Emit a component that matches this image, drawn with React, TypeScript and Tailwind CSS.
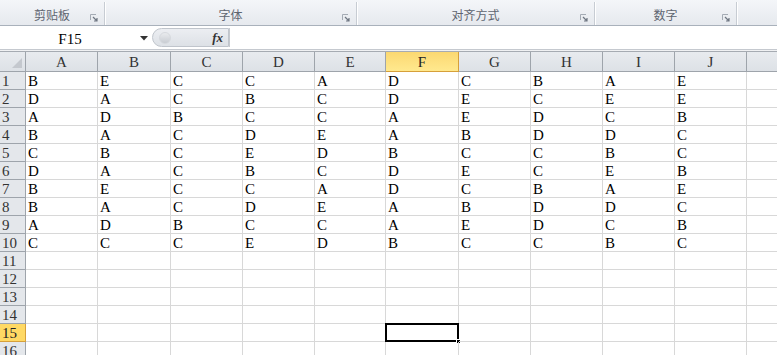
import React from 'react';

const cols = ['A', 'B', 'C', 'D', 'E', 'F', 'G', 'H', 'I', 'J'];
const widths = [72, 73, 72, 72, 71, 73, 72, 72, 72, 72];

const data = [
  'BECCADCBAE',
  'DACBCDECEE',
  'ADBCCAEDCB',
  'BACDEABDDC',
  'CBCEDBCCBC',
  'DACBCDECEB',
  'BECCADCBAE',
  'BACDEABDDC',
  'ADBCCAEDCB',
  'CCCEDBCCBC',
];

const cellFont = { fontFamily: "'Liberation Serif', 'DejaVu Serif', serif" };

/* ── little dialog launcher arrow in ribbon group ── */
function Launcher() {
  return (
    <svg width="9" height="9" viewBox="0 0 9 9" className="absolute right-[5px] top-[12px]">
      <path d="M0.5 0.5 H6 M0.5 0.5 V6" stroke="#a4abb4" strokeWidth="1" fill="none" />
      <path d="M3 3 L7 7 M7 4 V7 H4" stroke="#6f7782" strokeWidth="1.2" fill="none" />
    </svg>
  );
}

function Group({ label, width, launcher = true }: { label: string; width: number; launcher?: boolean }) {
  return (
    <div
      className="relative h-full flex items-center justify-center pt-[3px] border-r border-[#c7ccd3] shadow-[1px_0_0_#ffffff]"
      style={{ width }}
    >
      <span className="text-[12px] text-[#5e6570]" style={{ fontFamily: "'Noto Sans CJK SC', sans-serif" }}>
        {label}
      </span>
      {launcher && <Launcher />}
    </div>
  );
}

export default function App() {
  return (
    <div className="w-[777px] h-[355px] overflow-hidden bg-white select-none">
      {/* Ribbon group labels */}
      <div className="flex h-[26px] bg-gradient-to-b from-[#f4f6f9] to-[#e6e9ee] border-b border-[#a9b1bb] pt-[2px]">
        <Group label="剪贴板" width={105} />
        <Group label="字体" width={252} />
        <Group label="对齐方式" width={238} />
        <Group label="数字" width={142} />
        <div className="flex-1" />
      </div>

      {/* Formula bar */}
      <div className="flex h-[24px] bg-white border-b border-[#c5c9cf]">
        <div className="relative w-[152px] flex items-center">
          <span className="w-[140px] pt-[3px] text-center text-[15px] text-black" style={cellFont}>
            F15
          </span>
          <svg width="8" height="5" viewBox="0 0 8 5" className="absolute left-[140px] top-[10px]">
            <path d="M0 0 H8 L4 4.5 Z" fill="#333" />
          </svg>
        </div>
        <div className="relative w-[77px] my-[2px] flex items-center bg-gradient-to-b from-[#eceef2] to-[#dde1e6] border border-[#c0c5cc] rounded-l-full">
          <div className="ml-[6px] w-[12px] h-[12px] rounded-full bg-gradient-to-b from-[#e9ebee] to-[#c8ccd2] border border-[#d6d9de]" />
          <span
            className="ml-auto mr-[5px] text-[13px] italic font-bold text-[#333]"
            style={{ fontFamily: "'Liberation Serif', serif" }}
          >
            fx
          </span>
        </div>
        <div className="flex-1 border-l border-[#c5c9cf] my-[2px]" />
      </div>

      <div className="h-[2px] bg-[#f0f1f3] border-b border-[#a6abb2]" />

      {/* Column headers */}
      <div className="flex h-[20px]">
        <div className="relative w-[26px] shrink-0 bg-gradient-to-b from-[#e8ebef] to-[#dde1e6] border-r border-b border-[#9ea4ab]">
          <svg width="10" height="10" viewBox="0 0 10 10" className="absolute right-[3px] bottom-[3px]">
            <path d="M10 0 V10 H0 Z" fill="#c4c8ce" />
          </svg>
        </div>
        {cols.map((c, i) => (
          <div
            key={c}
            className={
              c === 'F'
                ? 'shrink-0 flex items-center justify-center pt-[2px] bg-gradient-to-b from-[#fbd871] to-[#ffe98e] border-r border-b border-[#d6a03a] text-[15px] text-[#222]'
                : 'shrink-0 flex items-center justify-center pt-[2px] bg-gradient-to-b from-[#e8ebef] to-[#dde1e6] border-r border-b border-[#9ea4ab] text-[15px] text-[#333]'
            }
            style={{ width: widths[i], ...cellFont }}
          >
            {c}
          </div>
        ))}
        <div className="flex-1 bg-gradient-to-b from-[#e8ebef] to-[#dde1e6] border-b border-[#9ea4ab]" />
      </div>

      {/* Rows */}
      {Array.from({ length: 16 }).map((_, r) => {
        const row = data[r];
        const selected = r === 14;
        return (
          <div key={r} className="flex h-[18px]">
            <div
              className={
                selected
                  ? 'w-[26px] shrink-0 flex items-center pl-[2px] pt-[2px] bg-[#ffd964] border-r border-b border-[#d6a03a] text-[15px] text-[#222]'
                  : 'w-[26px] shrink-0 flex items-center pl-[2px] pt-[2px] bg-[#e4e7eb] border-r border-b border-[#9ea4ab] text-[15px] text-[#333]'
              }
              style={cellFont}
            >
              {r + 1}
            </div>
            {cols.map((c, i) => {
              const active = selected && c === 'F';
              return (
                <div
                  key={c}
                  className="relative shrink-0 flex items-center pl-[2px] pt-[2px] border-r border-b border-[#d8d8d8] text-[15px] text-black"
                  style={{ width: widths[i], ...cellFont }}
                >
                  {row ? row[i] : ''}
                  {active && (
                    <>
                      <div className="absolute left-[-1px] top-[-1px] right-[-1px] bottom-[-1px] border-2 border-black" />
                      <div className="absolute right-[-3px] bottom-[-3px] w-[5px] h-[5px] bg-black border border-white" />
                    </>
                  )}
                </div>
              );
            })}
            <div className="flex-1 border-b border-[#d8d8d8]" />
          </div>
        );
      })}
    </div>
  );
}
